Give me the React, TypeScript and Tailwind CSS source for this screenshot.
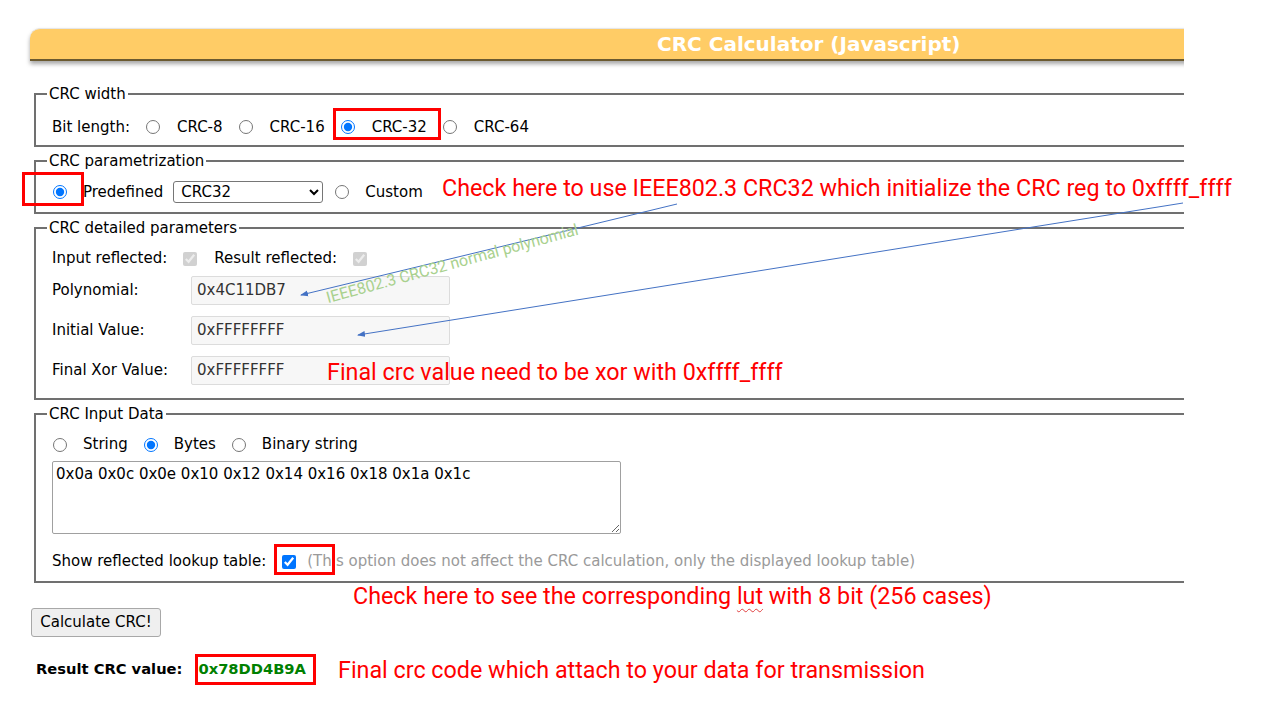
import React from 'react';

// Radio / checkbox helpers
const Radio = ({ checked = false, className = '' }: { checked?: boolean; className?: string }) => (
  <input type="radio" defaultChecked={checked} className={`m-0 w-[14px] h-[14px] shrink-0 ${className}`} />
);

const Legend = ({ children }: { children: React.ReactNode }) => (
  <legend className="px-[2px] leading-[16px]">{children}</legend>
);

const ReadOnlyField = ({ label, value }: { label: string; value: string }) => (
  <div className="flex items-center h-[29px]">
    <span className="w-[139px]">{label}</span>
    <input
      readOnly
      value={value}
      className="w-[259px] h-[29px] px-[5px] bg-[#f7f7f7] border border-[#dcdcdc] rounded-[2px] text-[#333]"
    />
  </div>
);

export default function App() {
  return (
    <div className="relative w-[1262px] h-[702px] bg-white overflow-hidden font-['DejaVu_Sans',Verdana,sans-serif] text-[15px] text-black">
      {/* Page (cropped at right) */}
      <div className="w-[1184px] h-full overflow-hidden pt-[28px]">
        {/* Header bar */}
        <div className="ml-[30px] w-[1200px] h-[33px] bg-[#ffcc66] rounded-tl-[10px] border-t border-[#e6e6e6] border-b-2 border-b-[#6b5a30] shadow-[0_3px_4px_rgba(0,0,0,0.35)] flex items-center pl-[627px] text-white font-bold text-[20px]">
          CRC Calculator (Javascript)
        </div>

        {/* CRC width */}
        <fieldset className="mt-[25px] ml-[34px] w-[1200px] border-2 border-[#707070] pl-[11px]">
          <Legend>CRC width</Legend>
          <div className="pl-[5px] pt-[14px] pb-[7px] h-[43px] flex items-center">
            <span>Bit length:</span>
            <Radio className="ml-4 mr-[17px]" />
            <span>CRC-8</span>
            <Radio className="ml-4 mr-[17px]" />
            <span>CRC-16</span>
            <Radio checked className="ml-4 mr-[17px]" />
            <span>CRC-32</span>
            <Radio className="ml-4 mr-[17px]" />
            <span>CRC-64</span>
          </div>
        </fieldset>

        {/* CRC parametrization */}
        <fieldset className="mt-[6px] ml-[34px] w-[1200px] border-2 border-[#707070] pl-[11px]">
          <Legend>CRC parametrization</Legend>
          <div className="pl-[5px] pt-[12px] pb-[8px] flex items-center">
            <Radio checked className="ml-[1px] mr-4" />
            <span>Predefined</span>
            <select className="ml-[10px] w-[150px] h-[22px] pl-[3px] border border-[#767676] rounded-[3px] bg-white">
              <option>CRC32</option>
            </select>
            <Radio className="ml-[12px] mr-4" />
            <span>Custom</span>
          </div>
        </fieldset>

        {/* CRC detailed parameters */}
        <fieldset className="mt-[6px] ml-[34px] w-[1200px] border-2 border-[#707070] pl-[11px]">
          <Legend>CRC detailed parameters</Legend>
          <div className="pl-[5px] pt-[13px] pb-[13px]">
            <div className="h-5 flex items-center">
              <span>Input reflected:</span>
              <input type="checkbox" defaultChecked disabled className="m-0 w-[14px] h-[14px] ml-4 mr-[17px]" />
              <span>Result reflected:</span>
              <input type="checkbox" defaultChecked disabled className="m-0 w-[14px] h-[14px] ml-4" />
            </div>
            <div className="mt-[7px] flex flex-col gap-[11px]">
              <ReadOnlyField label="Polynomial:" value="0x4C11DB7" />
              <ReadOnlyField label="Initial Value:" value="0xFFFFFFFF" />
              <ReadOnlyField label="Final Xor Value:" value="0xFFFFFFFF" />
            </div>
          </div>
        </fieldset>

        {/* CRC Input Data */}
        <fieldset className="mt-[6px] ml-[34px] w-[1200px] border-2 border-[#707070] pl-[11px]">
          <Legend>CRC Input Data</Legend>
          <div className="pl-[5px] pt-[13px] pb-[9px]">
            <div className="h-5 flex items-center">
              <Radio className="ml-[1px] mr-4" />
              <span>String</span>
              <Radio checked className="mx-4" />
              <span>Bytes</span>
              <Radio className="mx-4" />
              <span>Binary string</span>
            </div>
            <textarea
              defaultValue="0x0a 0x0c 0x0e 0x10 0x12 0x14 0x16 0x18 0x1a 0x1c"
              className="block mt-[6px] w-[569px] h-[73px] px-[3px] py-[3px] border border-[#a0a0a0] rounded-[2px] leading-[18px]"
            />
            <div className="mt-[18px] h-5 flex items-center">
              <span>Show reflected lookup table:</span>
              <input type="checkbox" defaultChecked className="m-0 w-[14px] h-[14px] ml-4 mr-[11px]" />
              <span className="text-[#9a9a9a]">
                (This option does not affect the CRC calculation, only the displayed lookup table)
              </span>
            </div>
          </div>
        </fieldset>

        <button className="mt-[25px] ml-[31px] w-[130px] h-[29px] bg-[#efefef] border border-[#a8a8a8] rounded-[3px]">
          Calculate CRC!
        </button>

        <div className="mt-[23px] ml-[36px] h-5 flex items-center font-bold text-[14.7px]">
          <span>Result CRC value:</span>
          <span className="ml-4 text-[#008000]">0x78DD4B9A</span>
        </div>
      </div>

      {/* Annotations */}
      <div className="absolute left-[333px] top-[108px] w-[108px] h-[32px] border-[3px] border-[#ff0000]" />
      <div className="absolute left-[22px] top-[172px] w-[62px] h-[34px] border-[3px] border-[#ff0000]" />
      <div className="absolute left-[274px] top-[544px] w-[61px] h-[31px] border-[3px] border-[#ff0000]" />
      <div className="absolute left-[195px] top-[654px] w-[121px] h-[31px] border-[3px] border-[#ff0000]" />

      <svg className="absolute left-0 top-0 pointer-events-none" width="1262" height="702">
        <defs>
          <marker id="ah" markerWidth="8" markerHeight="8" refX="7" refY="4" orient="auto">
            <path d="M0,1 L8,4 L0,7 z" fill="#4472c4" />
          </marker>
        </defs>
        <line x1="677" y1="204" x2="301" y2="295" stroke="#4472c4" strokeWidth="1" markerEnd="url(#ah)" />
        <line x1="1183" y1="203" x2="358" y2="335" stroke="#4472c4" strokeWidth="1" markerEnd="url(#ah)" />
      </svg>

      <span className="absolute left-[329px] top-[289px] leading-[18px] origin-bottom-left rotate-[-15.3deg] whitespace-nowrap text-[16px] text-[#a9d18e] font-['Roboto',sans-serif]">
        IEEE802.3 CRC32 normal polynomial
      </span>

      <div className="font-['Roboto',sans-serif] text-[#ff0000] text-[23.3px] leading-[28px] whitespace-nowrap">
        <span className="absolute left-[442px] top-[174px]">
          Check here to use IEEE802.3 CRC32 which initialize the CRC reg to 0xffff_ffff
        </span>
        <span className="absolute left-[327px] top-[358px]">Final crc value need to be xor with 0xffff_ffff</span>
        <span className="absolute left-[353px] top-[582px]">
          Check here to see the corresponding{' '}
          <span className="underline decoration-wavy decoration-[#e04040] decoration-1 underline-offset-4">lut</span> with 8
          bit (256 cases)
        </span>
        <span className="absolute left-[338px] top-[656px]">Final crc code which attach to your data for transmission</span>
      </div>
    </div>
  );
}
